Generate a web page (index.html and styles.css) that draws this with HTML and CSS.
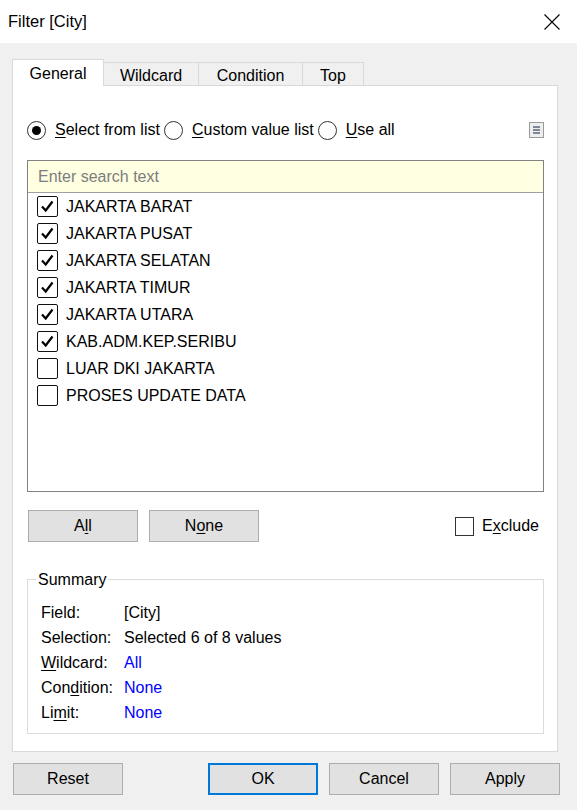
FILE: index.html
```html
<!DOCTYPE html>
<html>
<head>
<meta charset="utf-8">
<link rel="stylesheet" href="styles.css">
</head>
<body>
<div class="titlebar">
  <span class="title">Filter [City]</span>
  <svg class="close" width="16" height="16" viewBox="0 0 16 16"><path d="M0.5 0.5 L15.5 15.5 M15.5 0.5 L0.5 15.5" stroke="#000" stroke-width="1.1" fill="none"/></svg>
</div>
<div class="dialog">
  <div class="tabs">
    <div class="tab active w-general">General</div>
    <div class="tab w-wildcard">Wildcard</div>
    <div class="tab w-condition">Condition</div>
    <div class="tab w-top">Top</div>
  </div>
  <div class="panel">
    <div class="options">
      <label class="radio-item"><span class="radio checked"></span><span><u>S</u>elect from list</span></label>
      <label class="radio-item"><span class="radio"></span><span><u>C</u>ustom value list</span></label>
      <label class="radio-item"><span class="radio"></span><span><u>U</u>se all</span></label>
      <span class="menu-icon"><svg width="15" height="16" viewBox="0 0 15 16"><rect x="0.5" y="0.5" width="14" height="15" fill="#eeeeee" stroke="#9a9a9a"/><path d="M4 5 H11 M4 8 H11 M4 11 H11" stroke="#5b6577" stroke-width="1.4"/></svg></span>
    </div>
    <div class="listbox">
      <div class="search">Enter search text</div>
      <div class="items">
        <div class="item"><span class="cb on"><svg width="21" height="21" viewBox="0 0 21 21"><path d="M5 10.5 L8.7 14.5 L15.5 5.5" stroke="#000" stroke-width="2.2" fill="none"/></svg></span>JAKARTA BARAT</div>
        <div class="item"><span class="cb on"><svg width="21" height="21" viewBox="0 0 21 21"><path d="M5 10.5 L8.7 14.5 L15.5 5.5" stroke="#000" stroke-width="2.2" fill="none"/></svg></span>JAKARTA PUSAT</div>
        <div class="item"><span class="cb on"><svg width="21" height="21" viewBox="0 0 21 21"><path d="M5 10.5 L8.7 14.5 L15.5 5.5" stroke="#000" stroke-width="2.2" fill="none"/></svg></span>JAKARTA SELATAN</div>
        <div class="item"><span class="cb on"><svg width="21" height="21" viewBox="0 0 21 21"><path d="M5 10.5 L8.7 14.5 L15.5 5.5" stroke="#000" stroke-width="2.2" fill="none"/></svg></span>JAKARTA TIMUR</div>
        <div class="item"><span class="cb on"><svg width="21" height="21" viewBox="0 0 21 21"><path d="M5 10.5 L8.7 14.5 L15.5 5.5" stroke="#000" stroke-width="2.2" fill="none"/></svg></span>JAKARTA UTARA</div>
        <div class="item"><span class="cb on"><svg width="21" height="21" viewBox="0 0 21 21"><path d="M5 10.5 L8.7 14.5 L15.5 5.5" stroke="#000" stroke-width="2.2" fill="none"/></svg></span>KAB.ADM.KEP.SERIBU</div>
        <div class="item"><span class="cb"></span>LUAR DKI JAKARTA</div>
        <div class="item"><span class="cb"></span>PROSES UPDATE DATA</div>
      </div>
    </div>
    <div class="list-actions">
      <button class="btn">A<u>l</u>l</button>
      <button class="btn">N<u>o</u>ne</button>
      <label class="exclude"><span class="cb small"></span><span>E<u>x</u>clude</span></label>
    </div>
    <fieldset class="summary">
      <legend>Summary</legend>
      <div class="summary-grid">
        <span>Field:</span><span>[City]</span>
        <span>Selection:</span><span>Selected 6 of 8 values</span>
        <span><u>W</u>ildcard:</span><span class="link">All</span>
        <span>Con<u>d</u>ition:</span><span class="link">None</span>
        <span>Li<u>m</u>it:</span><span class="link">None</span>
      </div>
    </fieldset>
  </div>
  <div class="footer">
    <button class="btn">Reset</button>
    <div class="footer-right">
      <button class="btn primary">OK</button>
      <button class="btn">Cancel</button>
      <button class="btn">Apply</button>
    </div>
  </div>
</div>
</body>
</html>
```
FILE: styles.css
```css
* { box-sizing: border-box; }
html, body { margin: 0; padding: 0; }
body {
  width: 577px;
  height: 810px;
  background: #f0f0f0;
  font-family: "Liberation Sans", Arial, sans-serif;
  font-size: 16px;
  color: #000;
  overflow: hidden;
}
u { text-decoration: underline; text-underline-offset: 2px; }

.titlebar {
  height: 43px;
  background: #fff;
  display: flex;
  align-items: center;
  justify-content: space-between;
  padding: 0 17px 0 8px;
}
.title { font-size: 16.5px; }
.close { display: block; margin-top: 0; }

.dialog { padding: 16px 19px 0 12px; }

.tabs { display: flex; align-items: flex-end; height: 26px; }
.tab {
  height: 23px;
  border-top: 1px solid #d9d9d9;
  border-right: 1px solid #d9d9d9;
  background: #f0f0f0;
  display: flex;
  align-items: center;
  justify-content: center;
  padding-top: 3px;
}
.tab.active {
  height: 27px;
  margin-bottom: -1px;
  border-left: 1px solid #d9d9d9;
  background: #fff;
  position: relative;
  z-index: 1;
  padding-top: 2px;
  padding-bottom: 0;
}
.w-general { width: 92px; }
.w-wildcard { width: 95px; }
.w-condition { width: 104px; }
.w-top { width: 61px; }

.panel {
  background: #fff;
  border: 1px solid #d9d9d9;
  padding: 34px 13px 17px 14px;
}

.options { display: flex; align-items: center; height: 20px; gap: 4px; }
.radio-item { display: flex; align-items: center; gap: 9px; }
.radio {
  width: 19px; height: 19px;
  border: 1px solid #333;
  border-radius: 50%;
  display: flex; align-items: center; justify-content: center;
}
.radio.checked::after {
  content: "";
  width: 9px; height: 9px;
  border-radius: 50%;
  background: #000;
}
.menu-icon { margin-left: auto; display: flex; margin-top: -1px; }

.listbox {
  margin-top: 20px;
  border: 1px solid #828282;
  height: 332px;
}
.search {
  height: 32px;
  background: #ffffe1;
  border-bottom: 1px solid #a0a0a0;
  color: #7d7d7d;
  padding-left: 10px;
  display: flex;
  align-items: center;
}
.items { padding-left: 9px; }
.item { height: 27px; display: flex; align-items: center; gap: 8px; }
.cb {
  width: 21px; height: 21px;
  border: 1.5px solid #111;
  border-radius: 2px;
  display: flex; align-items: center; justify-content: center;
  background: #fff;
}
.cb svg { margin: -1.5px; }

.list-actions { display: flex; align-items: center; gap: 11px; margin-top: 18px; padding-left: 1px; }
.btn {
  width: 110px; height: 32px;
  background: #e1e1e1;
  border: 1px solid #adadad;
  font-family: inherit;
  font-size: 16px;
  color: #000;
  padding: 0;
}
.btn.primary { border: 2px solid #0078d7; }
.exclude { margin-left: auto; display: flex; align-items: center; gap: 8px; padding-right: 5px; }
.cb.small { width: 19px; height: 19px; border: 1px solid #333; border-radius: 0; }

.summary {
  margin: 28px 0 0 0;
  border: 1px solid #dcdcdc;
  padding: 2px 13px 8px 13px;
}
.summary legend { padding: 0 2px; margin-left: -5px; line-height: 19px; }
.summary-grid {
  display: grid;
  grid-template-columns: 83px auto;
  grid-auto-rows: 25px;
  align-items: center;
  margin-top: 9px;
}
.link { color: #0000ff; }

.footer { display: flex; justify-content: space-between; margin-top: 11px; padding-left: 1px; margin-right: -2px; }
.footer-right { display: flex; gap: 11px; }
```
